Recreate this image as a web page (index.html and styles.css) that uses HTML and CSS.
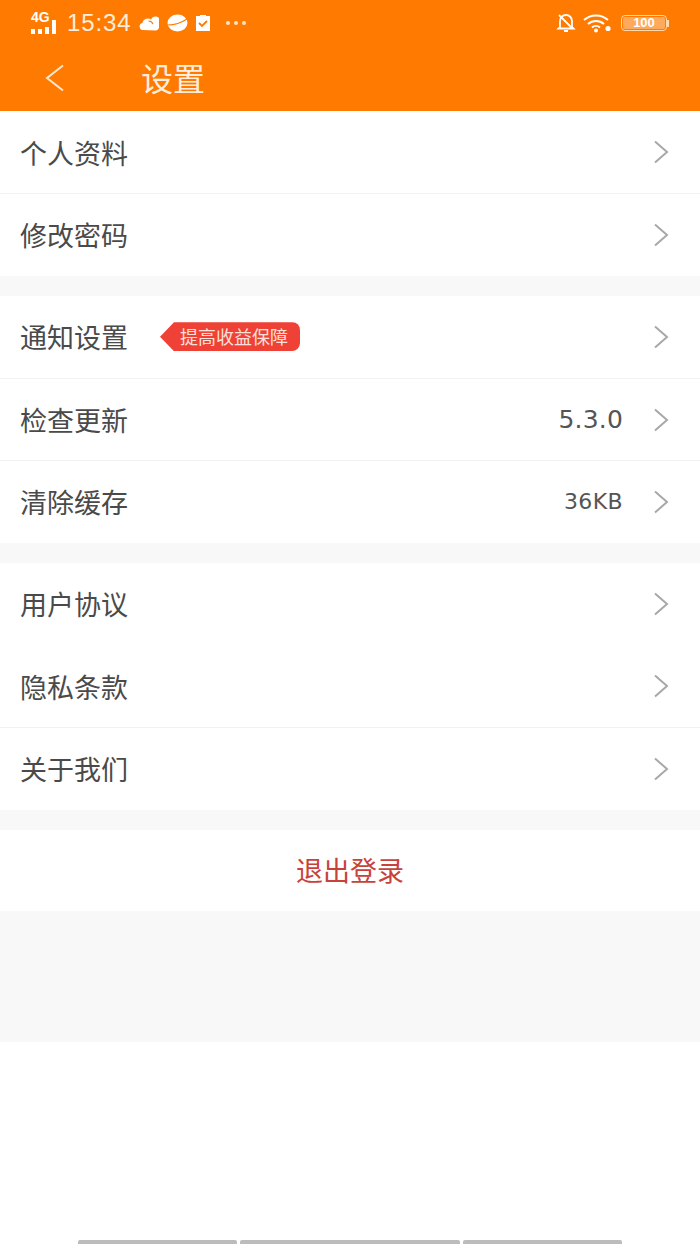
FILE: index.html
```html
<!DOCTYPE html>
<html lang="zh-CN">
<head>
  <meta charset="UTF-8" />
  <meta name="viewport" content="width=device-width, initial-scale=1.0" />
  <title>设置</title>
  <link rel="stylesheet" href="styles.css">
</head>
<body>
  <svg class="sprite" width="0" height="0">
    <symbol id="chev" viewBox="0 0 16 24">
      <path d="M2 1.500 14 12 2 22.500" fill="none" stroke="currentColor" stroke-width="2" />
    </symbol>
  </svg>

  <header class="top">
    <div class="status">
      <div class="status-left">
        <div class="signal">
          <span class="net">4G</span>
          <div class="bars"><i class="b1"></i><i class="b2"></i><i class="b3"></i><i class="b4"></i></div>
        </div>
        <span class="clock">15:34</span>
        <svg class="sicon" width="21" height="16" viewBox="0 0 21 16">
          <path d="M4 15a3.600 3.600 0 0 1-.6-7.100A6 6 0 0 1 9 3.400a5 5 0 0 1 3 1 5 5 0 0 1 4.500-2.900c1.500 0 2.700.6 3.500 1.500v8a3.800 3.800 0 0 1-3.200 4.500z" fill="#fff" />
          <path d="M9.500 6a5 5 0 0 1 4.500 3" fill="none" stroke="#ff7a00" stroke-width="1.200" />
        </svg>
        <svg class="sicon" width="21" height="18" viewBox="0 0 21 18">
          <ellipse cx="10.500" cy="9" rx="10" ry="8.500" fill="#fff" />
          <path d="M1 11c6 0 13-2 19-6" fill="none" stroke="#ff7a00" stroke-width="1.200" />
        </svg>
        <svg class="sicon" width="16" height="18" viewBox="0 0 16 18">
          <path d="M1 2h4V1h6v1h4v15H1z" fill="#fff" />
          <path d="M4 9l3 3 5-5" fill="none" stroke="#ff7a00" stroke-width="1.800" />
        </svg>
        <span class="dots"><i></i><i></i><i></i></span>
      </div>
      <div class="status-right">
        <svg width="20" height="20" viewBox="0 0 20 20">
          <path d="M4 14V8a6 6 0 0 1 12 0v6l1.500 1.500h-15zM8 18h4M3 2l14 14" fill="none" stroke="#fff" stroke-width="1.800" />
        </svg>
        <svg width="30" height="20" viewBox="0 0 30 20">
          <path d="M1 7a18 18 0 0 1 24 0M5 11a12 12 0 0 1 16 0M9 14.500a6 6 0 0 1 8 0" fill="none" stroke="#fff" stroke-width="2" />
          <circle cx="13" cy="17.500" r="2" fill="#fff" />
          <circle cx="25" cy="15.500" r="2.600" fill="#fff" />
        </svg>
        <div class="battery">
          <div class="cell"><span>100</span></div>
          <i class="cap"></i>
        </div>
      </div>
    </div>
    <div class="navbar">
      <svg class="back" width="20" height="28" viewBox="0 0 20 28">
        <path d="M18 1.500 2 14l16 12.500" fill="none" stroke="#ffe8cf" stroke-width="2" />
      </svg>
      <h1>设置</h1>
    </div>
  </header>

  <main>
    <section class="group">
      <a class="row"><span class="label">个人资料</span><svg class="chev"><use href="#chev" /></svg></a>
      <a class="row line"><span class="label">修改密码</span><svg class="chev"><use href="#chev" /></svg></a>
    </section>

    <section class="group">
      <a class="row">
        <span class="label">通知设置</span>
        <span class="tag">提高收益保障</span>
        <svg class="chev"><use href="#chev" /></svg>
      </a>
      <a class="row line">
        <span class="label">检查更新</span>
        <span class="value version">5.3.0</span>
        <svg class="chev"><use href="#chev" /></svg>
      </a>
      <a class="row line">
        <span class="label">清除缓存</span>
        <span class="value size">36KB</span>
        <svg class="chev"><use href="#chev" /></svg>
      </a>
    </section>

    <section class="group">
      <a class="row"><span class="label">用户协议</span><svg class="chev"><use href="#chev" /></svg></a>
      <a class="row"><span class="label">隐私条款</span><svg class="chev"><use href="#chev" /></svg></a>
      <a class="row line"><span class="label">关于我们</span><svg class="chev"><use href="#chev" /></svg></a>
    </section>

    <button class="logout">退出登录</button>
  </main>

  <div class="spacer"></div>

  <div class="tabs"><i class="t1"></i><i class="t2"></i><i class="t3"></i></div>
</body>
</html>
```

FILE: styles.css
```css
* {
  box-sizing: border-box;
}

html, body {
  height: 100%;
}

body {
  margin: 0;
  height: 1244px;
  overflow: hidden;
  display: flex;
  flex-direction: column;
  background: #fff;
  color: #4a4a4a;
  font-family: "Noto Sans CJK SC", "Liberation Sans", sans-serif;
}

.sprite {
  position: absolute;
}

/* header */
.top {
  height: 111px;
  background: #ff7a00;
  color: #fff;
}

.status {
  height: 46px;
  display: flex;
  justify-content: space-between;
  align-items: center;
  padding: 0 31px 0 31px;
}

.status-left, .status-right {
  display: flex;
  align-items: center;
}

.signal {
  width: 29px;
  height: 22px;
  position: relative;
}

.net {
  position: absolute;
  left: 0;
  top: -3px;
  font: bold 14px "Liberation Sans", sans-serif;
}

.bars {
  position: absolute;
  left: 0;
  bottom: 0;
  display: flex;
  align-items: flex-end;
  gap: 3px;
}

.bars i {
  width: 4px;
  height: 5px;
  background: #fff;
}

.bars .b3 {
  height: 7px;
}

.bars .b4 {
  height: 14px;
}

.clock {
  margin-left: 7px;
  font: 24px "Liberation Sans", sans-serif;
  letter-spacing: .9px;
  color: #ffeedd;
}

.sicon {
  margin-left: 7px;
}

.dots {
  display: flex;
  gap: 4px;
  margin-left: 15px;
}

.dots i {
  width: 4px;
  height: 4px;
  border-radius: 50%;
  background: #ffe3c8;
}

.status-right {
  gap: 7px;
}

.battery {
  display: flex;
  align-items: center;
  margin-left: 1px;
}

.cell {
  width: 46px;
  height: 16px;
  border: 1px solid #ffd9a8;
  border-radius: 4px;
  padding: 1px;
}

.cell span {
  display: block;
  height: 100%;
  border-radius: 2px;
  background: #ffa95c;
  color: #fff;
  font: bold 13px/12px "Liberation Sans", sans-serif;
  text-align: center;
}

.cap {
  width: 2px;
  height: 7px;
  background: #ffd9a8;
}

.navbar {
  height: 65px;
  display: flex;
  align-items: center;
  padding: 0 0 4px 45px;
}

.back {
  flex: none;
  margin-top: 2px;
}

.navbar h1 {
  margin: 0 0 0 76px;
  font-size: 32px;
  font-weight: 400;
  color: #ffeedd;
}

/* list */
main {
  background: #f8f8f8;
}

.group {
  background: #fff;
  margin-bottom: 20px;
}

.row {
  height: 82.333px;
  display: flex;
  align-items: center;
  padding: 0 31px 0 20px;
}

.line {
  border-top: 1px solid #f2f2f2;
}

.label {
  font-size: 27px;
  letter-spacing: 0;
}

.value {
  margin-left: auto;
  font-family: "DejaVu Sans", sans-serif;
  color: #555;
}

.version {
  font-size: 25px;
  letter-spacing: .2px;
}

.size {
  font-size: 22px;
  letter-spacing: .4px;
}

.chev {
  width: 16px;
  height: 24px;
  margin-left: 30px;
  color: #a8a8a8;
  flex: none;
}

.label + .chev, .tag + .chev {
  margin-left: auto;
}

.tag {
  position: relative;
  height: 29px;
  margin-left: 32px;
  padding: 0 12px 0 20px;
  background: #ef4136;
  color: #fde0d8;
  font-size: 18px;
  line-height: 29px;
  border-radius: 0 8px 8px 0;
  clip-path: polygon(0 50%, 14px 0, 100% 0, 100% 100%, 14px 100%);
}

.logout {
  display: block;
  width: 100%;
  height: 81px;
  padding: 0 0 2px;
  border: 0;
  background: #fff;
  color: #c8423c;
  font: 27px "Noto Sans CJK SC", sans-serif;
}

.spacer {
  height: 131px;
  background: #f8f8f8;
}

.tabs {
  margin-top: auto;
  height: 4px;
  display: flex;
  justify-content: center;
  gap: 3px;
}

.tabs i {
  background: #bcbcbc;
  border-radius: 2px 2px 0 0;
}

.t1, .t3 {
  width: 159px;
}

.t2 {
  width: 220px;
}
```
